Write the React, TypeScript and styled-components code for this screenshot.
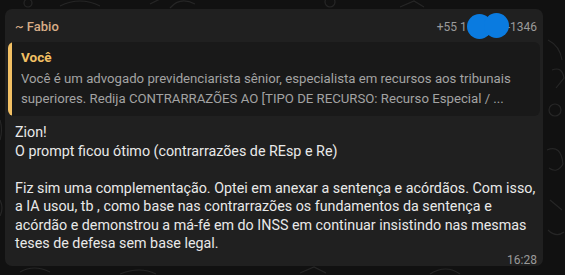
import React from "react";
import styled, { createGlobalStyle } from "styled-components";

const Global = createGlobalStyle`
  html, body { margin: 0; padding: 0; background: #111111; }
  body { font-family: Roboto, "Liberation Sans", Arial, sans-serif; -webkit-font-smoothing: antialiased; }
`;

const Page = styled.div`
  position: relative;
  width: 565px;
  height: 275px;
  overflow: hidden;
  background: #111111;
  padding: 9px 0 0 5px;
  box-sizing: border-box;
`;

const Doodles = styled.svg`
  position: absolute;
  inset: 0;
  width: 565px;
  height: 275px;
  pointer-events: none;
`;

const Bubble = styled.div`
  position: relative;
  width: 538px;
  height: 257px;
  box-sizing: border-box;
  background: #202020;
  border-radius: 7px;
  padding: 3px 3px 0 3px;
  display: flex;
  flex-direction: column;
`;

const Header = styled.div`
  display: flex;
  justify-content: space-between;
  align-items: center;
  height: 29px;
  padding: 0 3px 0 7px;
`;

const Name = styled.span`
  color: #d8ad87;
  font-size: 13px;
  font-weight: 500;
`;

const Phone = styled.span`
  color: #9b9b9b;
  font-size: 12px;
  display: inline-flex;
  align-items: center;
`;

const Redact = styled.span`
  position: relative;
  display: inline-block;
  width: 40px;
  height: 14px;
`;

const Dot = styled.span<{ $x: number; $y: number }>`
  position: absolute;
  left: ${(p) => p.$x}px;
  top: ${(p) => p.$y}px;
  width: 25px;
  height: 25px;
  border-radius: 50%;
  background: #0a7be0;
`;

const Quote = styled.div`
  margin-top: 1px;
  display: flex;
  background: #191919;
  border-radius: 6px;
  overflow: hidden;
  height: 74px;
`;

const QuoteBar = styled.div`
  width: 4px;
  flex: none;
  background: #f2c064;
`;

const QuoteBody = styled.div`
  padding: 6px 9px 0 9px;
  min-width: 0;
`;

const QuoteAuthor = styled.div`
  color: #f2c064;
  font-size: 13.5px;
  font-weight: 700;
  line-height: 19px;
`;

const QuoteText = styled.div`
  color: #a3a3a3;
  font-size: 13.2px;
  line-height: 19.5px;
  margin-top: 2px;
  display: -webkit-box;
  -webkit-line-clamp: 2;
  -webkit-box-orient: vertical;
  overflow: hidden;
`;

const Text = styled.div`
  color: #e9e9e9;
  font-size: 14.3px;
  line-height: 18.5px;
  padding: 7px 0 0 7px;
  margin-right: -2px;
  white-space: pre-wrap;
`;

const Footer = styled.div`
  display: flex;
  justify-content: flex-end;
  padding: 1px 3px 0 0;
`;

const Time = styled.span`
  color: #9a9a9a;
  font-size: 12px;
  line-height: 12px;
`;

const message = `Zion!
O prompt ficou ótimo (contrarrazões de REsp e Re)

Fiz sim uma complementação. Optei em anexar a sentença e acórdãos. Com isso, a IA usou, tb , como base nas contrarrazões os fundamentos da sentença e acórdão e demonstrou a má-fé em do INSS em continuar insistindo nas mesmas teses de defesa sem base legal.`;

export default function App() {
  return (
    <>
      <Global />
      <Page>
        <Doodles viewBox="0 0 565 275" fill="none" stroke="#262626" strokeWidth="1.2">
          <circle cx="28" cy="3" r="4" />
          <path d="M60 6 q20 -10 40 0" />
          <path d="M150 4 l12 -6 M170 8 q10 -12 25 -4" />
          <circle cx="330" cy="2" r="5" />
          <path d="M400 7 l14 -6 l10 6" />
          <path d="M548 40 q12 6 14 20 M552 70 q10 -4 12 8 l-8 10" />
          <circle cx="555" cy="110" r="6" />
          <path d="M547 150 q14 -6 16 14 q-6 10 -14 4" />
          <path d="M550 200 l12 10 M548 230 q8 8 16 2" />
          <path d="M20 272 q14 -8 30 0 M120 274 q20 -8 36 0 M300 273 l14 -6 l12 6 M430 274 q16 -10 30 0" />
          <path d="M0 120 q3 10 0 20 M0 200 q4 8 0 16" />
        </Doodles>
        <Bubble>
          <Header>
            <Name>~ Fabio</Name>
            <Phone>
              +55 1
              <Redact>
                <Dot $x={0} $y={-6} />
                <Dot $x={17} $y={-7} />
              </Redact>
              -1346
            </Phone>
          </Header>
          <Quote>
            <QuoteBar />
            <QuoteBody>
              <QuoteAuthor>Você</QuoteAuthor>
              <QuoteText>
                Você é um advogado previdenciarista sênior, especialista em recursos aos tribunais
                superiores. Redija CONTRARRAZÕES AO [TIPO DE RECURSO: Recurso Especial / ...
              </QuoteText>
            </QuoteBody>
          </Quote>
          <Text>{message}</Text>
          <Footer>
            <Time>16:28</Time>
          </Footer>
        </Bubble>
      </Page>
    </>
  );
}
